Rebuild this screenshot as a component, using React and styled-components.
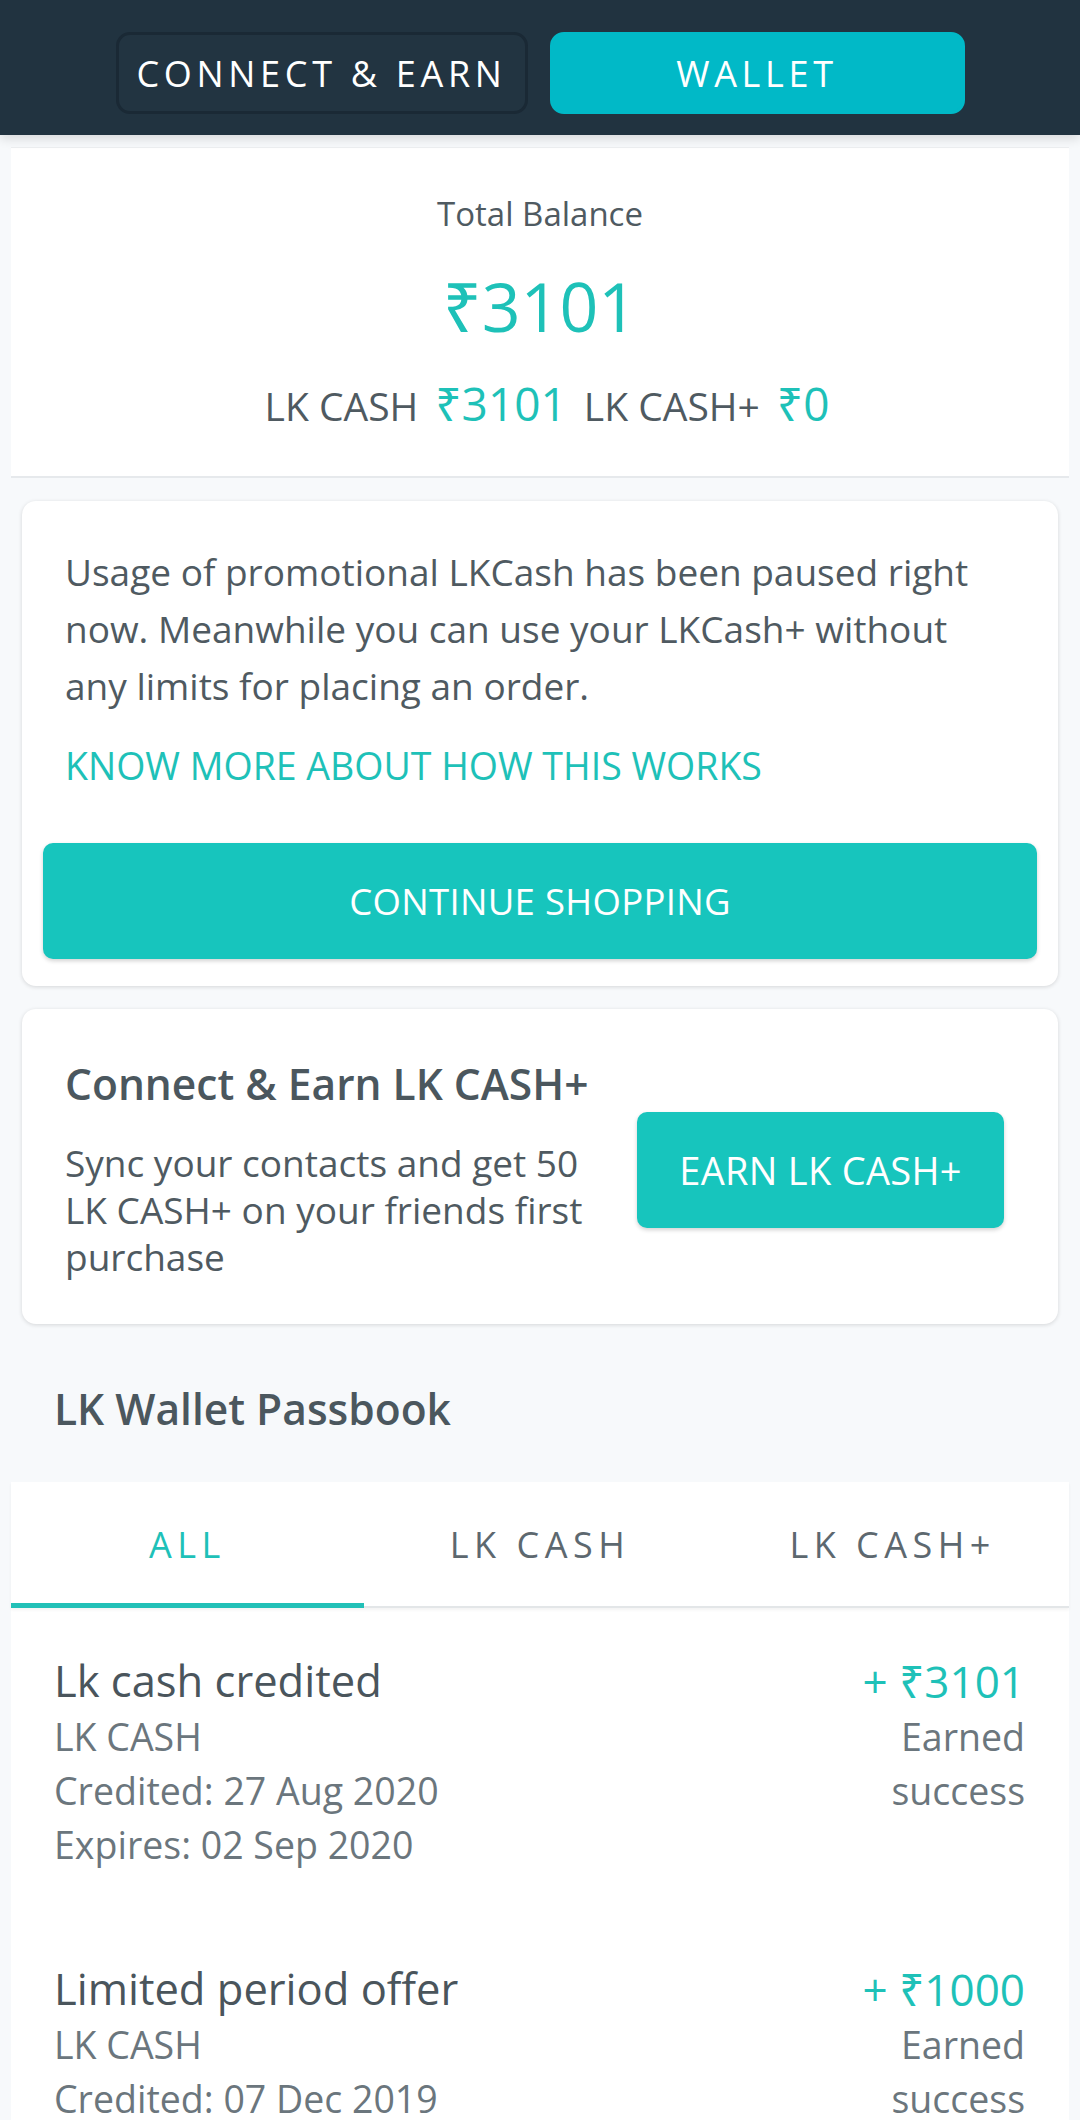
import React from 'react';
import styled, { createGlobalStyle } from 'styled-components';

const TEAL = '#1ec1b8';
const TEXT = '#4f5a61';
const MUTED = '#6b767d';

const GlobalStyle = createGlobalStyle`
  html, body {
    margin: 0;
    padding: 0;
    background: #f7f9fb;
  }
  body {
    font-family: "Open Sans", "Noto Sans", sans-serif;
    color: ${TEXT};
    -webkit-font-smoothing: antialiased;
  }
  * { box-sizing: border-box; }
`;

const Page = styled.div`
  width: 1080px;
  min-height: 2120px;
  background: #f7f9fb;
`;

const Header = styled.header`
  height: 135px;
  background: #213340;
  display: flex;
  justify-content: center;
  align-items: flex-start;
  gap: 22px;
  padding-top: 32px;
  box-shadow: 0 4px 10px rgba(0, 0, 0, 0.12);
  position: relative;
  z-index: 1;
`;

const HeaderTab = styled.button`
  width: ${p => (p.$active ? '415px' : '412px')};
  height: 82px;
  border-radius: 14px;
  border: 3px solid ${p => (p.$active ? '#01b9c7' : '#1a2935')};
  background: ${p => (p.$active ? '#01b9c7' : '#223441')};
  color: #ffffff;
  font-family: "Open Sans", sans-serif;
  font-size: 36px;
  letter-spacing: 4.7px;
  font-weight: 400;
  padding: 0;
`;

const BalanceCard = styled.section`
  margin: 12px 11px 0;
  background: #ffffff;
  border-top: 1px solid #eceef0;
  border-bottom: 2px solid #e6e9ec;
  padding: 46px 0 40px;
  text-align: center;
`;

const BalanceLabel = styled.div`
  font-size: 33px;
  line-height: 40px;
  color: ${TEXT};
`;

const BigAmount = styled.div`
  margin-top: 31px;
  font-size: 68px;
  line-height: 82px;
  color: ${TEAL};
`;

const SplitRow = styled.div`
  margin-top: 26px;
  padding-left: 14px;
  line-height: 60px;
  font-size: 39px;
  color: ${TEXT};
`;

const SplitAmount = styled.span`
  font-size: 46px;
  color: ${TEAL};
  margin-left: 17px;
  margin-right: ${p => (p.$last ? '0' : '17px')};
`;

const Card = styled.section`
  margin: 23px 22px 0;
  background: #ffffff;
  border-radius: 14px;
  box-shadow: 0 1px 4px rgba(0, 0, 0, 0.14);
  padding: ${p => p.$pad};
`;

const Notice = styled.p`
  margin: 0;
  padding: 0 22px;
  font-size: 37px;
  line-height: 57px;
  color: ${TEXT};
`;

const KnowMore = styled.div`
  margin-top: 23px;
  padding: 0 22px;
  font-size: 37.5px;
  line-height: 57px;
  color: ${TEAL};
`;

const PrimaryButton = styled.button`
  display: block;
  width: 100%;
  height: 116px;
  margin-top: ${p => p.$mt || '0'};
  border: none;
  border-radius: 10px;
  background: #17c5bd;
  color: #ffffff;
  font-family: "Open Sans", sans-serif;
  font-size: ${p => p.$size || '36.5px'};
  letter-spacing: 0.3px;
  box-shadow: 0 2px 4px rgba(0, 0, 0, 0.18);
  padding: 0;
`;

const EarnGrid = styled.div`
  display: grid;
  grid-template-columns: 1fr 367px;
  gap: 30px;
  align-items: center;
`;

const EarnTitle = styled.h2`
  margin: 0;
  font-size: 42.5px;
  line-height: 49px;
  font-weight: 600;
  color: #4b575e;
`;

const EarnText = styled.p`
  margin: 31px 0 0;
  font-size: 37px;
  line-height: 47px;
  color: ${TEXT};
`;

const SectionTitle = styled.h2`
  margin: 0;
  padding: 57px 54px 0;
  height: 158px;
  font-size: 42.5px;
  line-height: 56px;
  font-weight: 600;
  color: #4b575e;
`;

const Passbook = styled.section`
  margin: 0 11px;
  background: #ffffff;
`;

const Tabs = styled.nav`
  display: grid;
  grid-template-columns: repeat(3, 1fr);
  border-bottom: 2px solid #e3e6e8;
  box-shadow: 0 2px 3px rgba(0, 0, 0, 0.05);
`;

const Tab = styled.div`
  height: 126px;
  display: flex;
  align-items: center;
  justify-content: center;
  font-size: 36px;
  letter-spacing: 5.5px;
  color: ${p => (p.$active ? TEAL : '#5d686f')};
  border-bottom: 5px solid ${p => (p.$active ? '#22c0b7' : 'transparent')};
  margin-bottom: -2px;
  padding-top: 3px;
`;

const Entry = styled.div`
  display: flex;
  justify-content: space-between;
  padding: 44px 44px 44px 43px;
`;

const EntryTitle = styled.div`
  font-size: 43.5px;
  line-height: 58px;
  color: #4a555c;
`;

const EntryLine = styled.div`
  font-size: 37.5px;
  line-height: 54px;
  color: ${MUTED};
`;

const EntryRight = styled.div`
  text-align: right;
`;

const EntryAmount = styled.div`
  font-size: 44px;
  line-height: 58px;
  color: ${TEAL};
`;

const entries = [
  {
    title: 'Lk cash credited',
    type: 'LK CASH',
    credited: '27 Aug 2020',
    expires: '02 Sep 2020',
    amount: '3101',
  },
  {
    title: 'Limited period offer',
    type: 'LK CASH',
    credited: '07 Dec 2019',
    expires: '31 Dec 2019',
    amount: '1000',
  },
];

export default function App() {
  return (
    <Page>
      <GlobalStyle />
      <Header>
        <HeaderTab>CONNECT &amp; EARN</HeaderTab>
        <HeaderTab $active>WALLET</HeaderTab>
      </Header>

      <BalanceCard>
        <BalanceLabel>Total Balance</BalanceLabel>
        <BigAmount>₹3101</BigAmount>
        <SplitRow>
          LK CASH<SplitAmount>₹3101</SplitAmount>LK CASH+<SplitAmount $last>₹0</SplitAmount>
        </SplitRow>
      </BalanceCard>

      <Card $pad="42px 21px 27px">
        <Notice>
          Usage of promotional LKCash has been paused right now. Meanwhile you can use your
          LKCash+ without any limits for placing an order.
        </Notice>
        <KnowMore>KNOW MORE ABOUT HOW THIS WORKS</KnowMore>
        <PrimaryButton $mt="49px">CONTINUE SHOPPING</PrimaryButton>
      </Card>

      <Card $pad="50px 54px 44px 43px">
        <EarnGrid>
          <div>
            <EarnTitle>Connect &amp; Earn LK CASH+</EarnTitle>
            <EarnText>Sync your contacts and get 50 LK CASH+ on your friends first purchase</EarnText>
          </div>
          <PrimaryButton $size="38px">EARN LK CASH+</PrimaryButton>
        </EarnGrid>
      </Card>

      <SectionTitle>LK Wallet Passbook</SectionTitle>

      <Passbook>
        <Tabs>
          <Tab $active>ALL</Tab>
          <Tab>LK CASH</Tab>
          <Tab>LK CASH+</Tab>
        </Tabs>
        {entries.map(e => (
          <Entry key={e.title}>
            <div>
              <EntryTitle>{e.title}</EntryTitle>
              <EntryLine>{e.type}</EntryLine>
              <EntryLine>Credited: {e.credited}</EntryLine>
              <EntryLine>Expires: {e.expires}</EntryLine>
            </div>
            <EntryRight>
              <EntryAmount>+ ₹{e.amount}</EntryAmount>
              <EntryLine>Earned</EntryLine>
              <EntryLine>success</EntryLine>
            </EntryRight>
          </Entry>
        ))}
      </Passbook>
    </Page>
  );
}
